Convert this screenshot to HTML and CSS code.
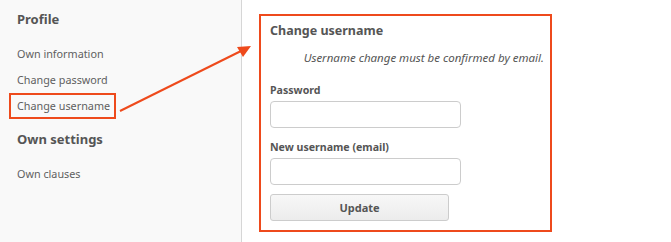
FILE: index.html
```html
<!DOCTYPE html>
<html lang="en">
<head>
    <meta charset="UTF-8">
    <title>Change username</title>
    <link rel="stylesheet" href="styles.css">
</head>
<body>
    <div class="page">
        <aside class="sidebar">
            <h2>Profile</h2>
            <ul class="menu">
                <li><a href="#">Own information</a></li>
                <li><a href="#">Change password</a></li>
                <li><a href="#" class="highlight">Change username</a></li>
            </ul>
            <h2>Own settings</h2>
            <ul class="menu">
                <li><a href="#">Own clauses</a></li>
            </ul>
        </aside>
        <main class="content">
            <form class="panel">
                <h3>Change username</h3>
                <p class="note">Username change must be confirmed by email.</p>
                <label for="password">Password</label>
                <input type="password" id="password">
                <label for="email">New username (email)</label>
                <input type="text" id="email">
                <button type="button" class="btn">Update</button>
            </form>
        </main>
        <svg class="arrow" width="671" height="242" viewBox="0 0 671 242">
            <line x1="120" y1="111" x2="241" y2="51" stroke="#ee4a1c" stroke-width="2"/>
            <polygon points="251,46 237,47 243,57" fill="#ee4a1c"/>
        </svg>
    </div>
</body>
</html>
```

FILE: styles.css
```css
:root {
    --text-color: #555555;
    --link-color: #5f5f5f;
    --accent-color: #ee4a1c;
    --border-color: #cccccc;
}

* {
    margin: 0;
    padding: 0;
    box-sizing: border-box;
}

body {
    font-family: 'Noto Sans', sans-serif;
    color: var(--text-color);
    background-color: #ffffff;
}

.page {
    position: relative;
    display: flex;
    height: 242px;
}

.sidebar {
    width: 242px;
    background-color: #f9f9f9;
    border-right: 1px solid #d6d6d6;
    padding: 10px 0 0 9px;
}

.sidebar h2 {
    font-size: 13px;
    font-weight: 700;
    padding-left: 8px;
    line-height: 18px;
    margin-bottom: 13px;
}

.menu {
    list-style: none;
    margin-bottom: 11px;
}

.menu li {
    height: 26px;
    display: flex;
    align-items: center;
}

.menu a {
    display: inline-block;
    font-size: 10.8px;
    color: var(--link-color);
    text-decoration: none;
    padding: 0 4px 0 6px;
    line-height: 22px;
    border: 2px solid transparent;
}

.menu a.highlight {
    border-color: var(--accent-color);
}

.content {
    flex: 1;
    padding: 14px 0 0 17px;
}

.panel {
    width: 293px;
    height: 218px;
    border: 2px solid var(--accent-color);
    padding: 5px 6px 0 9px;
    display: flex;
    flex-direction: column;
}

.panel h3 {
    font-size: 12.5px;
    font-weight: 700;
    line-height: 20px;
}

.note {
    font-size: 11.5px;
    font-style: italic;
    text-align: right;
    line-height: 16px;
    margin-top: 9px;
    margin-bottom: 17px;
}

.panel label {
    font-size: 10.6px;
    font-weight: 700;
    line-height: 15px;
    margin-bottom: 3px;
}

.panel input {
    width: 191px;
    height: 27px;
    border: 1px solid var(--border-color);
    border-radius: 4px;
    margin-bottom: 12px;
    background-color: #ffffff;
}

.btn {
    width: 179px;
    height: 27px;
    margin-top: -3px;
    font-family: inherit;
    font-size: 11px;
    font-weight: 700;
    color: var(--text-color);
    background: linear-gradient(#f7f7f7, #ececec);
    border: 1px solid var(--border-color);
    border-radius: 3px;
}

.arrow {
    position: absolute;
    top: 0;
    left: 0;
    pointer-events: none;
}
```
